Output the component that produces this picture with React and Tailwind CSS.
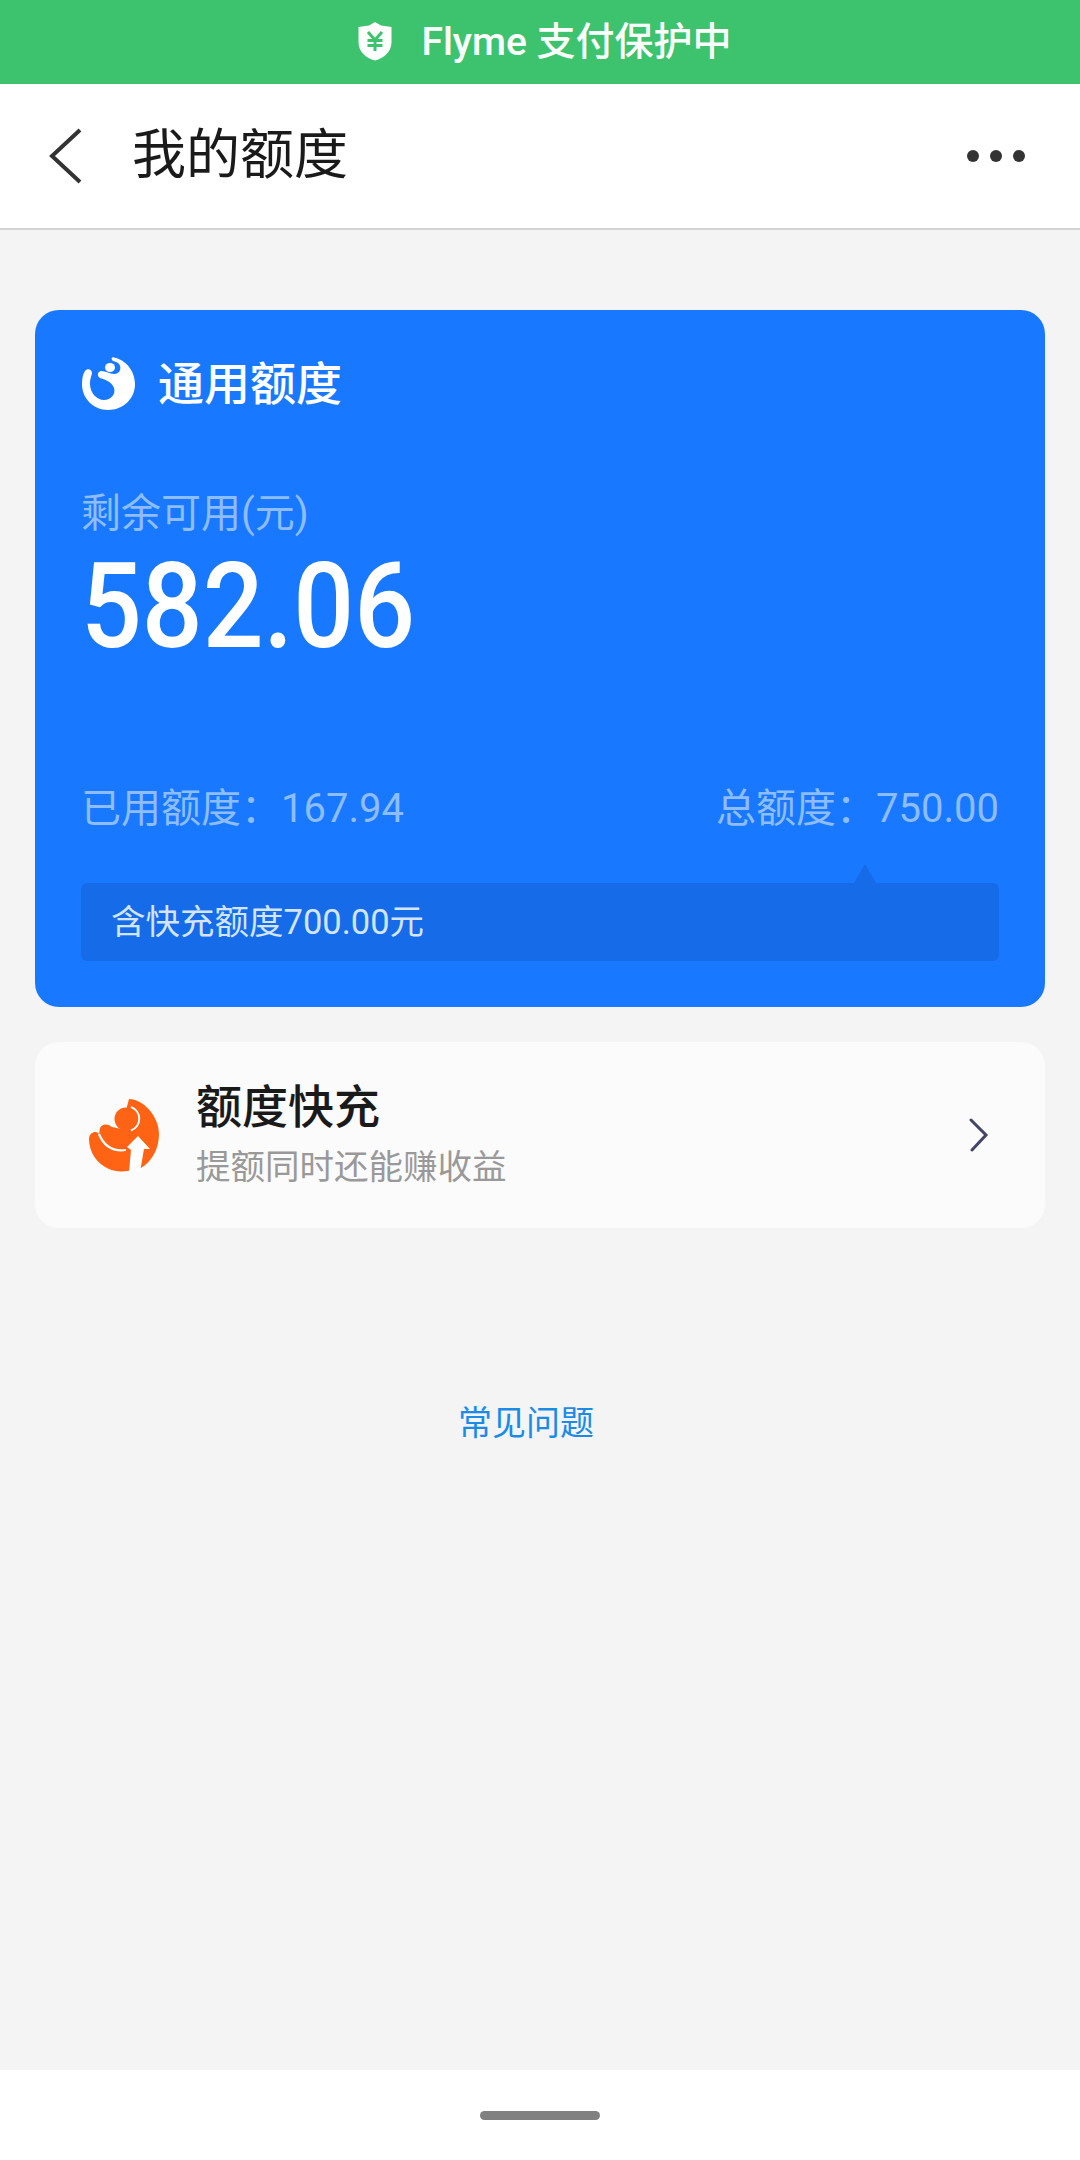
import React from "react";

const FONT = "font-['Roboto','Noto_Sans_CJK_SC',sans-serif]";

function ShieldIcon() {
  return (
    <svg width="34" height="40" viewBox="0 0 34 40">
      <path d="M17 0 L23 3.5 L33.5 5 V20 C33.5 30 26 36 17 38.5 C8 36 .5 30 .5 20 V5 L11 3.5 Z" fill="#fff" />
      <path d="M10 10 L17 18 L24 10 M9.5 18.5 H24.5 M9.5 23.5 H24.5 M17 17 V29" fill="none" stroke="#3dc36e" strokeWidth="3" />
    </svg>
  );
}

function BlueLogo() {
  return (
    <svg width="56" height="56" viewBox="10 10 56 56">
      <path
        d="M43 11.500 C55 14 64 25 64 38 C64 53 52 64 37 64 C23 64 11 53 11 38 C11 32 12 28 14 25 C16 22 21 23 21 27 C21 29 19 32 19 38 C19 47 26 54 33 54 C40 54 45 48 43 42 C41 36 35 34 29 32 C26 30 26 26 30 25 C35 25 39 28 43 28 C49 28 51 22 48 18 C46 15 42 16 41 14 C40 12 41 11 43 11.500 Z"
        fill="#fff"
      />
      <ellipse cx="39" cy="21.500" rx="5" ry="4.500" fill="#fff" />
    </svg>
  );
}

function OrangeLogo() {
  return (
    <svg width="72" height="74" viewBox="17 14 72 74">
      <path
        d="M58 15 C72 15 88 32 88 50 C88 66 80 78 70 84 L62 86 C54 88 44 88 38 85 C26 80 18 68 18 55 C18 48 26 46 28 50 L29 44 C31 40 36 39 41 43 L50 45 Z"
        fill="#ff6313"
      />
      <polygon points="67,52 79,65 73,65 69,88 58,88 60,66 56,63" fill="#fff" />
      <path d="M28 50 C32 60 40 68 55 66" fill="none" stroke="#fff" strokeWidth="2.200" />
      <circle cx="55" cy="35" r="11.500" fill="#ff6313" />
      <path d="M60 23 A12.500 12.500 0 0 1 60 46.500" fill="none" stroke="#fff" strokeWidth="2" />
    </svg>
  );
}

export default function App() {
  return (
    <div className={`${FONT} flex h-[2160px] w-[1080px] flex-col bg-[#f4f4f4]`}>
      <div className="flex h-[84px] items-center justify-center bg-[#3dc36e] pl-[10px]">
        <ShieldIcon />
        <span className="ml-[29px] text-[39px] font-medium leading-none text-white">Flyme 支付保护中</span>
      </div>

      <div className="flex h-[146px] items-center border-b-2 border-[#d4d4d4] bg-white pr-[55px]">
        <svg className="ml-[47px]" width="36" height="56" viewBox="0 0 36 56">
          <path d="M33 2 L5 28 L33 54" fill="none" stroke="#333" strokeWidth="4" />
        </svg>
        <span className="ml-[49px] text-[54px] leading-none text-[#1a1a1a]">我的额度</span>
        <div className="ml-auto flex gap-[11px]">
          <span className="h-[12px] w-[12px] rounded-full bg-[#333]" />
          <span className="h-[12px] w-[12px] rounded-full bg-[#333]" />
          <span className="h-[12px] w-[12px] rounded-full bg-[#333]" />
        </div>
      </div>

      <div className="mx-[35px] mt-[80px] flex h-[697px] flex-col rounded-[24px] bg-[#1878ff] px-[46px] pt-[46px]">
        <div className="flex items-center">
          <BlueLogo />
          <span className="ml-[21px] text-[46px] font-medium leading-none text-white">通用额度</span>
        </div>
        <div className="mt-[82px] text-[40px] leading-none text-[#8dbcff]">剩余可用(元)</div>
        <div className="mt-[13px] origin-left scale-x-[0.9] text-[119px] font-medium leading-none text-white">582.06</div>
        <div className="mt-[123px] flex items-center justify-between text-[40px] leading-none text-[#8dbcff]">
          <span>已用额度：167.94</span>
          <span>总额度：750.00</span>
        </div>
        <div className="relative mt-[54px] flex h-[78px] items-center rounded-[6px] bg-[#156be8] px-[30px] text-[34.500px] leading-none text-[#d3e4ff]">
          <span className="absolute right-[123px] top-[-19px] h-0 w-0 border-x-[11px] border-b-[19px] border-x-transparent border-b-[#156be8]" />
          含快充额度700.00元
        </div>
      </div>

      <div className="mx-[35px] mt-[35px] flex h-[186px] items-center rounded-[24px] bg-[#fbfbfb] pl-[53px] pr-[56px]">
        <OrangeLogo />
        <div className="ml-[36px] flex flex-col">
          <span className="mt-[-2px] text-[46px] font-medium leading-none text-[#1a1a1a]">额度快充</span>
          <span className="mt-[20px] text-[34.500px] leading-none text-[#999]">提额同时还能赚收益</span>
        </div>
        <svg className="ml-auto" width="20" height="34" viewBox="0 0 20 34">
          <path d="M2 2 L17 17 L3 32" fill="none" stroke="#44446a" strokeWidth="3" strokeLinecap="round" />
        </svg>
      </div>

      <div className="mt-[178px] pr-[28px] text-center text-[34px] leading-none text-[#1a8ce6]">常见问题</div>

      <div className="mt-auto flex h-[90px] items-start justify-center bg-white pt-[41px]">
        <span className="h-[9px] w-[120px] rounded-full bg-[#808080]" />
      </div>
    </div>
  );
}
